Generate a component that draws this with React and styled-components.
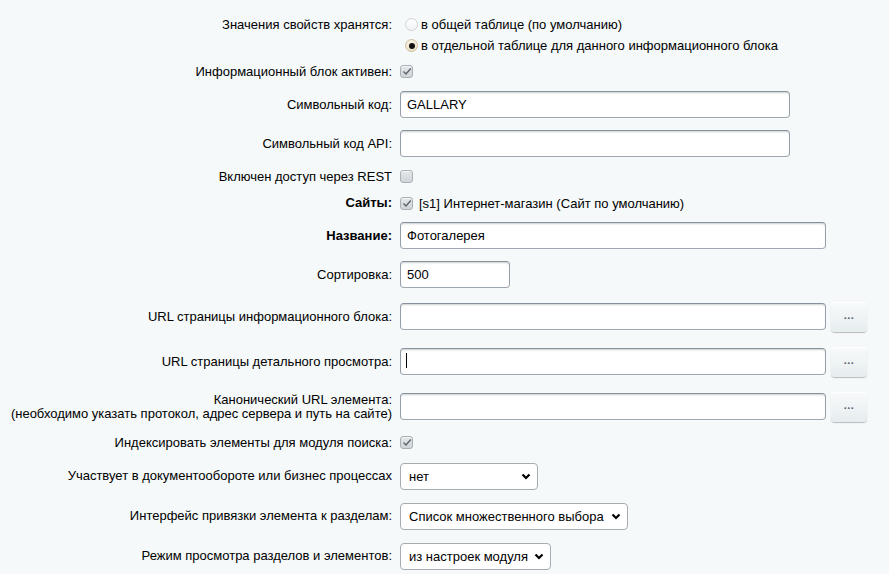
import styled, { createGlobalStyle } from 'styled-components';

const GlobalStyle = createGlobalStyle`
  body {
    margin: 0;
    background: #f5f9f9;
    font-family: "Liberation Sans", Arial, sans-serif;
    font-size: 13px;
    color: #000;
  }
`;

const Form = styled.div`
  padding-top: 8px;
`;

const Row = styled.div`
  display: grid;
  grid-template-columns: 392px 1fr;
  column-gap: 8px;
  align-items: ${(p) => (p.$top ? 'start' : 'center')};
  height: ${(p) => p.$h}px;
  padding: ${(p) => (p.$top ? '6px 0 2px' : '0')};
  box-sizing: border-box;
`;

const Label = styled.div`
  text-align: right;
  line-height: ${(p) => (p.$top ? '21px' : '14px')};
  font-weight: ${(p) => (p.$bold ? 700 : 400)};
  white-space: nowrap;
`;

const Field = styled.div`
  display: flex;
  align-items: center;
  position: relative;
`;

const RadioList = styled.div`
  display: flex;
  flex-direction: column;
`;

const RadioLine = styled.label`
  display: flex;
  align-items: center;
  height: 21px;
  gap: 3px;
  padding-left: 5px;
`;

const Radio = styled.span`
  width: 13px;
  height: 13px;
  box-sizing: border-box;
  border-radius: 50%;
  border: 1px solid ${(p) => (p.$checked ? '#cdbf9f' : '#cfd3d5')};
  background: ${(p) =>
    p.$checked ? 'linear-gradient(#f7f1e3, #ece2c8)' : 'linear-gradient(#ffffff, #f1f3f4)'};
  display: flex;
  align-items: center;
  justify-content: center;

  &::after {
    content: '';
    display: ${(p) => (p.$checked ? 'block' : 'none')};
    width: 6px;
    height: 6px;
    border-radius: 50%;
    background: #111;
  }
`;

const Check = styled.span`
  width: 13px;
  height: 13px;
  box-sizing: border-box;
  border: 1px solid #a9b0b5;
  border-radius: 3px;
  background: linear-gradient(#e3e7e9, #cfd5d8);
  box-shadow: inset 0 1px 0 rgba(255, 255, 255, 0.6);
  display: flex;
  align-items: center;
  justify-content: center;
  flex-shrink: 0;

  svg {
    display: block;
  }
`;

const CheckText = styled.span`
  margin-left: 6px;
`;

const TextInput = styled.input`
  width: ${(p) => p.$w}px;
  height: 27px;
  box-sizing: border-box;
  border: 1px solid;
  border-color: #87919c #959ea9 #9ea7b1 #959ea9;
  border-radius: 4px;
  background: #fff;
  box-shadow: 0 1px 0 rgba(255, 255, 255, 0.3), inset 0 2px 2px -1px rgba(180, 188, 191, 0.7);
  padding: 0 6px;
  font: inherit;
  color: #000;
  outline: none;
`;

const Caret = styled.span`
  position: absolute;
  left: 6px;
  top: 6px;
  width: 1px;
  height: 15px;
  background: #000;
`;

const DotsButton = styled.button`
  width: 36px;
  height: 30px;
  margin-left: 5px;
  border: none;
  border-radius: 4px;
  background: linear-gradient(#f8fafb, #e6edef);
  box-shadow: 0 1px 1px rgba(0, 0, 0, 0.25), inset 0 1px 0 #fff;
  color: #55606a;
  font: 700 11px "Liberation Sans", Arial, sans-serif;
  letter-spacing: 0.5px;
  padding: 0 0 3px;
`;

const SelectBox = styled.div`
  width: ${(p) => p.$w}px;
  height: 27px;
  box-sizing: border-box;
  border: 1px solid #a6acb1;
  border-radius: 4px;
  background: #fff;
  display: flex;
  align-items: center;
  justify-content: space-between;
  padding: 0 6px 0 8px;
`;

const Chevron = () => (
  <svg width="10" height="7" viewBox="0 0 10 7">
    <path d="M1.5 1.5 L5 5 L8.5 1.5" fill="none" stroke="#000" strokeWidth="2.2" />
  </svg>
);

const CheckBox = ({ checked }) => (
  <Check>
    {checked && (
      <svg width="10" height="9" viewBox="0 0 10 9">
        <path d="M1.5 4.5 L4 7 L8.8 1.5" fill="none" stroke="#5d656b" strokeWidth="1.4" />
      </svg>
    )}
  </Check>
);

const Select = ({ w, value }) => (
  <SelectBox $w={w}>
    <span>{value}</span>
    <Chevron />
  </SelectBox>
);

const App = () => (
  <>
    <GlobalStyle />
    <Form>
      <Row $h={50} $top>
        <Label $top>Значения свойств хранятся:</Label>
        <RadioList>
          <RadioLine>
            <Radio />
            в общей таблице (по умолчанию)
          </RadioLine>
          <RadioLine>
            <Radio $checked />
            в отдельной таблице для данного информационного блока
          </RadioLine>
        </RadioList>
      </Row>
      <Row $h={27}>
        <Label>Информационный блок активен:</Label>
        <Field>
          <CheckBox checked />
        </Field>
      </Row>
      <Row $h={39}>
        <Label>Символьный код:</Label>
        <Field>
          <TextInput $w={390} defaultValue="GALLARY" />
        </Field>
      </Row>
      <Row $h={39}>
        <Label>Символьный код API:</Label>
        <Field>
          <TextInput $w={390} />
        </Field>
      </Row>
      <Row $h={27}>
        <Label>Включен доступ через REST</Label>
        <Field>
          <CheckBox />
        </Field>
      </Row>
      <Row $h={26}>
        <Label $bold>Сайты:</Label>
        <Field>
          <CheckBox checked />
          <CheckText>[s1] Интернет-магазин (Сайт по умолчанию)</CheckText>
        </Field>
      </Row>
      <Row $h={39}>
        <Label $bold>Название:</Label>
        <Field>
          <TextInput $w={426} defaultValue="Фотогалерея" />
        </Field>
      </Row>
      <Row $h={39}>
        <Label>Сортировка:</Label>
        <Field>
          <TextInput $w={110} defaultValue="500" />
        </Field>
      </Row>
      <Row $h={45}>
        <Label>URL страницы информационного блока:</Label>
        <Field>
          <TextInput $w={426} />
          <DotsButton>...</DotsButton>
        </Field>
      </Row>
      <Row $h={45}>
        <Label>URL страницы детального просмотра:</Label>
        <Field>
          <TextInput $w={426} />
          <Caret />
          <DotsButton>...</DotsButton>
        </Field>
      </Row>
      <Row $h={45}>
        <Label>
          Канонический URL элемента:
          <br />
          (необходимо указать протокол, адрес сервера и путь на сайте)
        </Label>
        <Field>
          <TextInput $w={426} />
          <DotsButton>...</DotsButton>
        </Field>
      </Row>
      <Row $h={27}>
        <Label>Индексировать элементы для модуля поиска:</Label>
        <Field>
          <CheckBox checked />
        </Field>
      </Row>
      <Row $h={40}>
        <Label>Участвует в документообороте или бизнес процессах</Label>
        <Field>
          <Select w={138} value="нет" />
        </Field>
      </Row>
      <Row $h={40}>
        <Label>Интерфейс привязки элемента к разделам:</Label>
        <Field>
          <Select w={228} value="Список множественного выбора" />
        </Field>
      </Row>
      <Row $h={40}>
        <Label>Режим просмотра разделов и элементов:</Label>
        <Field>
          <Select w={151} value="из настроек модуля" />
        </Field>
      </Row>
    </Form>
  </>
);

export default App;
